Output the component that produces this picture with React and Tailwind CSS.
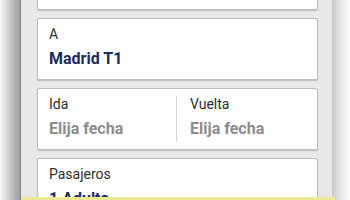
import React from 'react';

const font = { fontFamily: 'Roboto, "Noto Sans", "Liberation Sans", sans-serif' };

const cardBox = 'h-[62px] shrink-0 bg-white border border-[#bcbcbc] rounded-[2px] shadow-[0_1px_1px_rgba(0,0,0,0.18)]';

function Field({ label, value, placeholder }) {
  return (
    <>
      <p className="text-[14px] leading-[18px] text-[#2e2e2e]">{label}</p>
      <p className={`mt-[5px] text-[16px] leading-[22px] font-bold ${placeholder ? 'text-[#8c8c8c]' : 'text-[#1d2a5c]'}`}>
        {value}
      </p>
    </>
  );
}

function Card({ label, value, className = '' }) {
  return (
    <div className={`${cardBox} pl-[11px] pt-[6px] ${className}`}>
      <Field label={label} value={value} />
    </div>
  );
}

export default function App() {
  return (
    <div className="relative flex w-[350px] h-[200px] overflow-hidden bg-white" style={font}>
      {/* left edge shadow */}
      <div className="w-[21px] shrink-0 bg-gradient-to-r from-[#fbfbfb] via-[#c9c9c9] to-[#9c9c9c] border-r border-[#858585]" />

      {/* form panel */}
      <div className="w-[311px] shrink-0 bg-[#e8e8e8] pl-[16px] pr-[14px] flex flex-col gap-[8px]">
        {/* origin card, scrolled out of view above */}
        <div className={`${cardBox} -mt-[52px]`} />
        <Card label="A" value="Madrid T1" />

        <div className={`${cardBox} flex items-start`}>
          <div className="flex-1 pl-[11px] pt-[6px]">
            <Field label="Ida" value="Elija fecha" placeholder />
          </div>
          <div className="w-px h-[46px] mt-[7px] bg-[#d4d4d4]" />
          <div className="flex-1 pl-[13px] pt-[6px]">
            <Field label="Vuelta" value="Elija fecha" placeholder />
          </div>
        </div>

        <Card label="Pasajeros" value="1 Adulto" />
      </div>

      {/* right edge shadow */}
      <div className="flex-1 bg-gradient-to-r from-[#c9c9c9] via-[#e6e6e6] to-[#fdfdfd]" />

      {/* bottom banner edge */}
      <div className="absolute bottom-0 left-[21px] w-[314px] h-[3px] bg-[#ece994]" />
    </div>
  );
}
